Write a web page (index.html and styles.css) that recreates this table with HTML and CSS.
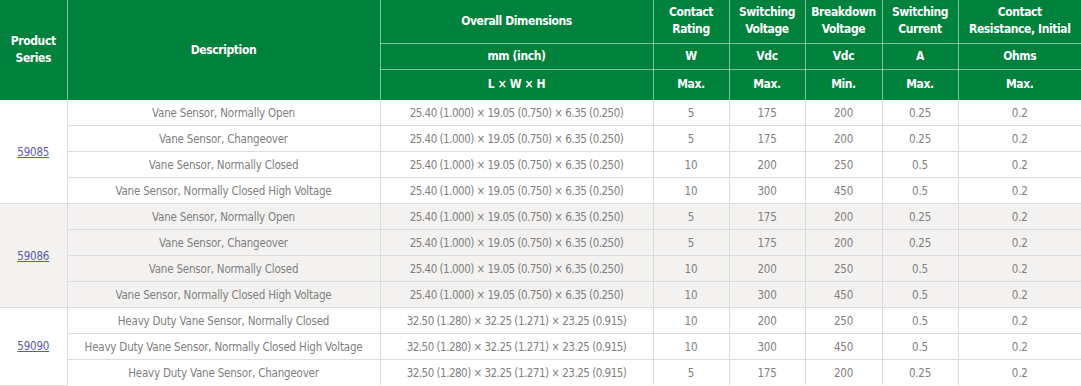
FILE: index.html
```html
<!DOCTYPE html>
<html>
<head>
<meta charset="utf-8">
<link rel="stylesheet" href="styles.css">
</head>
<body>
<table class="spec">
  <colgroup>
    <col class="c-series"><col class="c-desc"><col class="c-dim"><col class="c-n"><col class="c-n"><col class="c-n2"><col class="c-n"><col class="c-res">
  </colgroup>
  <thead>
    <tr class="h1">
      <th rowspan="3">Product<br>Series</th>
      <th rowspan="3">Description</th>
      <th>Overall Dimensions</th>
      <th>Contact<br>Rating</th>
      <th>Switching<br>Voltage</th>
      <th>Breakdown<br>Voltage</th>
      <th>Switching<br>Current</th>
      <th>Contact<br>Resistance, Initial</th>
    </tr>
    <tr class="h2">
      <th>mm (inch)</th><th>W</th><th>Vdc</th><th>Vdc</th><th>A</th><th>Ohms</th>
    </tr>
    <tr class="h3">
      <th>L × W × H</th><th>Max.</th><th>Max.</th><th>Min.</th><th>Max.</th><th>Max.</th>
    </tr>
  </thead>
  <tbody>
    <tr><td rowspan="4" class="series"><a href="#">59085</a></td><td>Vane Sensor, Normally Open</td><td class="dim">25.40 (1.000) × 19.05 (0.750) × 6.35 (0.250)</td><td>5</td><td>175</td><td>200</td><td>0.25</td><td>0.2</td></tr>
    <tr><td>Vane Sensor, Changeover</td><td class="dim">25.40 (1.000) × 19.05 (0.750) × 6.35 (0.250)</td><td>5</td><td>175</td><td>200</td><td>0.25</td><td>0.2</td></tr>
    <tr><td>Vane Sensor, Normally Closed</td><td class="dim">25.40 (1.000) × 19.05 (0.750) × 6.35 (0.250)</td><td>10</td><td>200</td><td>250</td><td>0.5</td><td>0.2</td></tr>
    <tr><td>Vane Sensor, Normally Closed High Voltage</td><td class="dim">25.40 (1.000) × 19.05 (0.750) × 6.35 (0.250)</td><td>10</td><td>300</td><td>450</td><td>0.5</td><td>0.2</td></tr>
  </tbody>
  <tbody class="alt">
    <tr><td rowspan="4" class="series"><a href="#">59086</a></td><td>Vane Sensor, Normally Open</td><td class="dim">25.40 (1.000) × 19.05 (0.750) × 6.35 (0.250)</td><td>5</td><td>175</td><td>200</td><td>0.25</td><td>0.2</td></tr>
    <tr><td>Vane Sensor, Changeover</td><td class="dim">25.40 (1.000) × 19.05 (0.750) × 6.35 (0.250)</td><td>5</td><td>175</td><td>200</td><td>0.25</td><td>0.2</td></tr>
    <tr><td>Vane Sensor, Normally Closed</td><td class="dim">25.40 (1.000) × 19.05 (0.750) × 6.35 (0.250)</td><td>10</td><td>200</td><td>250</td><td>0.5</td><td>0.2</td></tr>
    <tr><td>Vane Sensor, Normally Closed High Voltage</td><td class="dim">25.40 (1.000) × 19.05 (0.750) × 6.35 (0.250)</td><td>10</td><td>300</td><td>450</td><td>0.5</td><td>0.2</td></tr>
  </tbody>
  <tbody>
    <tr><td rowspan="3" class="series"><a href="#">59090</a></td><td>Heavy Duty Vane Sensor, Normally Closed</td><td class="dim">32.50 (1.280) × 32.25 (1.271) × 23.25 (0.915)</td><td>10</td><td>200</td><td>250</td><td>0.5</td><td>0.2</td></tr>
    <tr><td>Heavy Duty Vane Sensor, Normally Closed High Voltage</td><td class="dim">32.50 (1.280) × 32.25 (1.271) × 23.25 (0.915)</td><td>10</td><td>300</td><td>450</td><td>0.5</td><td>0.2</td></tr>
    <tr><td>Heavy Duty Vane Sensor, Changeover</td><td class="dim">32.50 (1.280) × 32.25 (1.271) × 23.25 (0.915)</td><td>5</td><td>175</td><td>200</td><td>0.25</td><td>0.2</td></tr>
  </tbody>
</table>
</body>
</html>
```
FILE: styles.css
```css
html, body {
  margin: 0;
  padding: 0;
  background: #ffffff;
}
.spec {
  width: 1081px;
  table-layout: fixed;
  border-collapse: collapse;
  font-family: "DejaVu Sans Condensed", "DejaVu Sans", sans-serif;
  font-stretch: condensed;
}
.c-series { width: 67px; }
.c-desc { width: 313px; }
.c-dim { width: 273px; }
.c-n { width: 76px; }
.c-n2 { width: 77px; }
.c-res { width: 123px; }

.spec th {
  background: #00823d;
  color: #ffffff;
  font-weight: bold;
  font-size: 12px;
  letter-spacing: -0.4px;
  line-height: 17px;
  padding: 0;
  text-align: center;
  vertical-align: middle;
  border: 1px solid rgba(255, 255, 255, 0.5);
}
.spec thead tr:first-child th { border-top: none; }
.spec thead th:first-child { border-left: none; }
.spec thead tr.h1 th:last-child,
.spec thead tr.h2 th:last-child,
.spec thead tr.h3 th:last-child { border-right: none; }
.spec thead tr.h3 th { border-bottom: none; }
.spec thead tr.h1 th[rowspan] { border-bottom: none; }
.spec .h1 { height: 43px; }
.spec .h2 { height: 26px; }
.spec .h3 { height: 31px; }

.spec td {
  height: 25px;
  padding: 0;
  text-align: center;
  vertical-align: middle;
  color: #808080;
  font-size: 11.5px;
  line-height: 14px;
  letter-spacing: -0.2px;
  border: 1px solid #dddddd;
  white-space: nowrap;
}
.spec td.dim { letter-spacing: -0.5px; }
.spec tbody tr td:first-child { border-left: none; }
.spec tbody tr td:last-child { border-right: none; }
.spec tbody:first-of-type tr:first-child td { border-top: none; }
.spec tbody:last-of-type tr:last-child td { border-bottom: none; }
.spec tbody.alt td { background: #f3f2f0; }
.spec .series a {
  color: #5a5ab0;
  text-decoration: underline;
}
```
